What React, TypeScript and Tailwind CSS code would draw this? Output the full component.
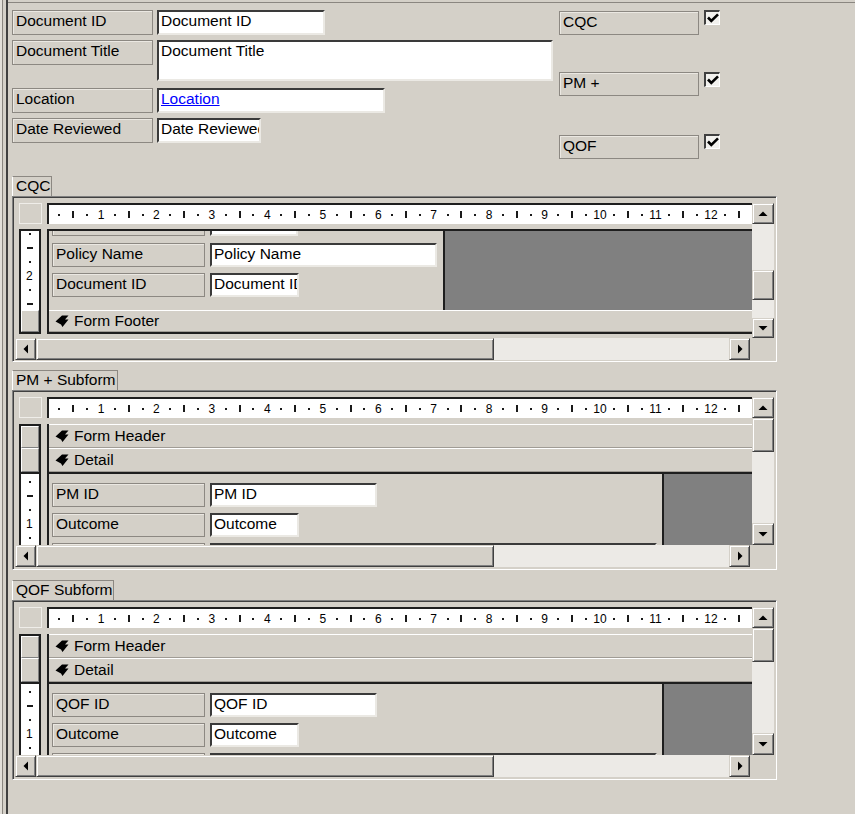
import React from "react";

// Access form in design view: main form fields + three subform controls
const Q = 55.45 / 4; // ruler quarter inch in px

const raised =
  "bg-[#d4d0c8] border border-t-[#d4d0c8] border-l-[#d4d0c8] border-r-[#404040] border-b-[#404040] shadow-[inset_1px_1px_0_#ffffff,inset_-1px_-1px_0_#808080]";

function Label({ children, className = "" }: { children?: React.ReactNode; className?: string }) {
  return (
    <div
      className={`shrink-0 overflow-hidden whitespace-nowrap border border-[#8c8882] pl-[3px] pt-px leading-[18px] shadow-[inset_1px_1px_0_#ebe8e2] ${className}`}
    >
      {children}
    </div>
  );
}

function TextBox({ children, className = "" }: { children?: React.ReactNode; className?: string }) {
  return (
    <div
      className={`shrink-0 overflow-hidden whitespace-nowrap border-2 border-t-[#3a3a3a] border-l-[#3a3a3a] border-r-[#ebe9e4] border-b-[#ebe9e4] bg-white pl-[2px] leading-[18px] ${className}`}
    >
      {children}
    </div>
  );
}

function Check() {
  return (
    <div className="flex h-[15px] w-[16px] shrink-0 items-center justify-center border-t-2 border-l-2 border-r border-b border-t-[#404040] border-l-[#404040] border-r-white border-b-white bg-[#f2f1ee]">
      <svg width="12" height="11" viewBox="0 0 12 11">
        <path d="M1 4.5 L4.3 8 L11 1.3" stroke="#000" strokeWidth="2.6" fill="none" />
      </svg>
    </div>
  );
}

function Arrow({ dir, className = "" }: { dir: "up" | "down" | "left" | "right"; className?: string }) {
  const pts = {
    up: "0.5,7 5,2.5 9.5,7",
    down: "0.5,3 5,7.5 9.5,3",
    left: "7,0.5 2.5,5 7,9.5",
    right: "3,0.5 7.5,5 3,9.5",
  }[dir];
  return (
    <div className={`flex shrink-0 items-center justify-center ${raised} ${className}`}>
      <svg width="10" height="10" viewBox="0 0 10 10">
        <polygon points={pts} fill="#000" />
      </svg>
    </div>
  );
}

function HRuler() {
  const marks = [];
  for (let k = 1; k <= 51; k++) {
    const x = -3.45 + k * Q;
    const m = k % 4;
    if (m === 0)
      marks.push(
        <span
          key={k}
          className="absolute top-1/2 -translate-x-1/2 -translate-y-1/2 text-[12px] leading-none text-black"
          style={{ left: x }}
        >
          {k / 4}
        </span>
      );
    else if (m === 2)
      marks.push(
        <span key={k} className="absolute top-[6px] h-[7px] w-[2px] -translate-x-1/2 bg-[#1a1a1a]" style={{ left: x }} />
      );
    else
      marks.push(
        <span key={k} className="absolute top-[9px] h-[2px] w-[2px] -translate-x-1/2 bg-[#1a1a1a]" style={{ left: x }} />
      );
  }
  return (
    <div className="relative h-[21px] w-[705px] overflow-hidden border-l-2 border-t-2 border-[#1e1e1e] bg-white">
      {marks}
    </div>
  );
}

function VRuler({ base, from, to, className = "" }: { base: number; from: number; to: number; className?: string }) {
  const marks = [];
  for (let k = from; k <= to; k++) {
    const y = base + k * Q;
    const m = k % 4;
    if (m === 0)
      marks.push(
        <span
          key={k}
          className="absolute left-[5px] -translate-y-1/2 text-[12px] leading-none text-black"
          style={{ top: y }}
        >
          {k / 4}
        </span>
      );
    else if (m === 2)
      marks.push(
        <span key={k} className="absolute left-[6px] h-[2px] w-[6px] -translate-y-1/2 bg-[#1a1a1a]" style={{ top: y }} />
      );
    else
      marks.push(
        <span key={k} className="absolute left-[8px] h-[2px] w-[2px] -translate-y-1/2 bg-[#1a1a1a]" style={{ top: y }} />
      );
  }
  return <div className={`relative overflow-hidden bg-white ${className}`}>{marks}</div>;
}

function SectionIcon() {
  return (
    <svg width="14" height="13" viewBox="0 0 14 13" className="shrink-0">
      <path d="M0.5 6.5 L7 0.5 L13.5 0.5 L10 4.5 L13.5 4.5 L7.5 12 L6 9.5 Z" fill="#000" />
    </svg>
  );
}

function SectionBar({ children, className = "" }: { children: React.ReactNode; className?: string }) {
  return (
    <div
      className={`flex shrink-0 items-center gap-[5px] border-t border-b border-t-white border-b-[#a09c95] bg-[#d4d0c8] pl-[6px] leading-[18px] ${className}`}
    >
      <SectionIcon />
      <span>{children}</span>
    </div>
  );
}

function Row({
  label,
  value,
  boxClass,
  className = "",
}: {
  label: string;
  value: string;
  boxClass: string;
  className?: string;
}) {
  return (
    <div className={`flex shrink-0 gap-[5px] ${className}`}>
      <Label className="h-[24px] w-[153px]">{label}</Label>
      <TextBox className={`h-[24px] ${boxClass}`}>{value}</TextBox>
    </div>
  );
}

function HScroll() {
  return (
    <div className="flex h-[22px] shrink-0">
      <div className="flex w-[739px] pl-[2px] pr-[2px]">
        <Arrow dir="left" className="h-[22px] w-[21px]" />
        <div className={`w-[458px] ${raised}`} />
        <div className="flex-1 bg-[#eceae6]" />
        <Arrow dir="right" className="h-[22px] w-[21px]" />
      </div>
      <div className="w-[22px] bg-[#d4d0c8]" />
    </div>
  );
}

function Frame({
  tab,
  tabClass,
  bottomClass,
  vscroll,
  children,
}: {
  tab: string;
  tabClass: string;
  bottomClass: string;
  vscroll: React.ReactNode;
  children: React.ReactNode;
}) {
  return (
    <div className="flex flex-col items-start">
      <div
        className={`h-[20px] overflow-hidden whitespace-nowrap border-t border-r border-l border-t-[#8c8882] border-r-[#8c8882] border-l-white pl-[3px] leading-[18px] ${tabClass}`}
      >
        {tab}
      </div>
      <div
        className={`flex w-[765px] flex-col border border-t-[#808080] border-l-[#808080] border-r-white border-b-white pr-[2px] shadow-[inset_1px_1px_0_#404040] ${bottomClass}`}
      >
        <div className="flex">
          <div className="flex w-[739px] flex-col pl-[6px] pt-[6px]">{children}</div>
          <div className="flex w-[22px] flex-col pt-[6px]">{vscroll}</div>
        </div>
        <HScroll />
      </div>
    </div>
  );
}

function Corner() {
  return <div className="h-[21px] w-[23px] shrink-0 border border-[#efede9] bg-[#d4d0c8]" />;
}

const selector =
  "shrink-0 border border-t-white border-l-white border-r-[#808080] border-b-[#808080] bg-[#d4d0c8]";

function CqcSubform() {
  return (
    <Frame
      tab="CQC"
      tabClass="w-[40px]"
      bottomClass="pb-px"
      vscroll={
        <>
          <Arrow dir="up" className="h-[21px]" />
          <div className="h-[46px] bg-[#eceae6]" />
          <div className={`h-[30px] ${raised}`} />
          <div className="h-[18px] bg-[#eceae6]" />
          <Arrow dir="down" className="h-[20px]" />
        </>
      }
    >
      <div className="flex gap-[5px]">
        <Corner />
        <HRuler />
      </div>
      <div className="mt-[5px] flex h-[109px] gap-[6px]">
        <div className="flex h-[105px] w-[22px] shrink-0 flex-col border-2 border-[#1e1e1e]">
          <VRuler base={-65.9} from={5} to={10} className="h-[79px] shrink-0" />
          <div className={`flex-1 ${selector}`} />
        </div>
        <div className="flex h-[105px] w-[705px] flex-col overflow-hidden border-t-2 border-b-2 border-l-2 border-[#1e1e1e]">
          <div className="flex h-[79px] shrink-0">
            <div className="flex w-[394px] flex-col overflow-hidden pl-[3px]">
              <Row label="" value="" boxClass="w-[88px]" className="-mt-[19px]" />
              <Row label="Policy Name" value="Policy Name" boxClass="w-[227px]" className="mt-[7px]" />
              <Row label="Document ID" value="Document ID" boxClass="w-[89px]" className="mt-[6px]" />
            </div>
            <div className="flex-1 border-l-2 border-[#1e1e1e] bg-[#808080]" />
          </div>
          <SectionBar className="h-[22px]">Form Footer</SectionBar>
        </div>
      </div>
    </Frame>
  );
}

function ChildSubform({ tab, tabClass, idLabel }: { tab: string; tabClass: string; idLabel: string }) {
  return (
    <Frame
      tab={tab}
      tabClass={tabClass}
      bottomClass="pb-[2px]"
      vscroll={
        <>
          <Arrow dir="up" className="h-[21px]" />
          <div className={`h-[34px] ${raised}`} />
          <div className="h-[71px] bg-[#eceae6]" />
          <Arrow dir="down" className="h-[22px]" />
        </>
      }
    >
      <div className="flex gap-[5px]">
        <Corner />
        <HRuler />
      </div>
      <div className="mt-[6px] flex h-[121px] gap-[6px]">
        <div className="flex h-[121px] w-[22px] shrink-0 flex-col border-x-2 border-t-2 border-[#1e1e1e]">
          <div className={`h-[22px] ${selector}`} />
          <div className={`h-[24px] ${selector}`} />
          <VRuler base={-5.5} from={1} to={6} className="flex-1 border-t-2 border-[#1e1e1e]" />
        </div>
        <div className="flex h-[121px] w-[705px] flex-col overflow-hidden border-l-2 border-[#1e1e1e]">
          <SectionBar className="h-[24px]">Form Header</SectionBar>
          <SectionBar className="h-[24px]">Detail</SectionBar>
          <div className="flex min-h-0 flex-1 border-t-2 border-[#1e1e1e]">
            <div className="flex w-[613px] flex-col overflow-hidden pl-[3px] pt-[9px]">
              <Row label={idLabel} value={idLabel} boxClass="w-[167px]" />
              <Row label="Outcome" value="Outcome" boxClass="w-[89px]" className="mt-[6px]" />
              <Row label="" value="" boxClass="w-[447px]" className="mt-[6px]" />
            </div>
            <div className="flex-1 border-l-2 border-[#1e1e1e] bg-[#808080]" />
          </div>
        </div>
      </div>
    </Frame>
  );
}

export default function App() {
  return (
    <div className="flex h-[814px] w-[855px] overflow-hidden bg-[#d4d0c8] font-['Liberation_Sans',Arial,sans-serif] text-[15.5px] text-black">
      <div className="flex w-[8px] shrink-0">
        <div className="w-[2px] bg-[#e2dfd9]" />
        <div className="w-px bg-[#8a8680]" />
        <div className="w-[3px]" />
        <div className="w-[2px] bg-[#404040]" />
      </div>
      <div className="flex-1 pt-[2px]">
        <div className="flex flex-col border-t border-[#8a8680] pl-[4px]">
          <div className="flex h-[173px] shrink-0">
            <div className="flex w-[541px] shrink-0 flex-col pt-[7px]">
              <div className="flex gap-[4px]">
                <Label className="h-[25px] w-[141px]">Document ID</Label>
                <TextBox className="h-[25px] w-[168px]">Document ID</TextBox>
              </div>
              <div className="mt-[5px] flex items-start gap-[4px]">
                <Label className="h-[25px] w-[141px]">Document Title</Label>
                <TextBox className="h-[41px] w-[396px]">Document Title</TextBox>
              </div>
              <div className="mt-[7px] flex gap-[4px]">
                <Label className="h-[25px] w-[141px]">Location</Label>
                <TextBox className="h-[25px] w-[228px]">
                  <span className="text-[#0000ff] underline">Location</span>
                </TextBox>
              </div>
              <div className="mt-[5px] flex gap-[4px]">
                <Label className="h-[25px] w-[141px]">Date Reviewed</Label>
                <TextBox className="h-[25px] w-[104px]">Date Reviewed</TextBox>
              </div>
            </div>
            <div className="ml-[6px] flex flex-col pt-[8px]">
              <div className="flex items-start gap-[5px]">
                <Label className="h-[24px] w-[140px]">CQC</Label>
                <div className="-mt-px">
                  <Check />
                </div>
              </div>
              <div className="mt-[37px] flex items-start gap-[5px]">
                <Label className="h-[24px] w-[140px]">PM +</Label>
                <Check />
              </div>
              <div className="mt-[39px] flex items-start gap-[5px]">
                <Label className="h-[24px] w-[140px]">QOF</Label>
                <div className="-mt-px">
                  <Check />
                </div>
              </div>
            </div>
          </div>
          <CqcSubform />
          <div className="mt-[8px]">
            <ChildSubform tab="PM + Subform" tabClass="w-[106px]" idLabel="PM ID" />
          </div>
          <div className="mt-[10px]">
            <ChildSubform tab="QOF Subform" tabClass="w-[102px]" idLabel="QOF ID" />
          </div>
        </div>
      </div>
    </div>
  );
}
